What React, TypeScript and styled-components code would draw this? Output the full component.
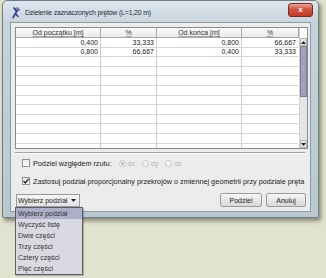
import styled, { createGlobalStyle } from 'styled-components';

const GlobalStyle = createGlobalStyle`
  html, body {
    margin: 0;
    padding: 0;
  }
  body {
    background: #e2e3cf;
    font-family: "Liberation Sans", Arial, sans-serif;
  }
`;

const Desktop = styled.div`
  position: relative;
  width: 326px;
  height: 278px;
  overflow: hidden;
  box-sizing: border-box;
  padding-left: 2px;
  background: #e2e3cf;
`;

const Window = styled.div`
  width: 317px;
  height: 218px;
  box-sizing: border-box;
  display: flex;
  flex-direction: column;
  padding: 0 7px 5px 7px;
  border: 1px solid #6f7f86;
  border-radius: 5px 5px 2px 2px;
  background: linear-gradient(#dde6ee, #c6d3dd 22px, #b9c7cf);
  box-shadow: 2px 3px 4px rgba(70, 72, 50, 0.6);
`;

const TitleBar = styled.div`
  height: 21px;
  display: flex;
  align-items: center;
  gap: 4px;
  padding-left: 1px;
`;

const TitleText = styled.span`
  flex: 1;
  padding-top: 2px;
  font-size: 6.9px;
  letter-spacing: -0.15px;
  color: #1e2a36;
`;

const CloseButton = styled.div`
  align-self: flex-start;
  width: 23px;
  height: 12px;
  margin: 2px -2px 0 0;
  border: 1px solid #7a2a22;
  border-radius: 3px;
  background: linear-gradient(#e9a595, #d1533f 45%, #c23a26);
  display: flex;
  align-items: center;
  justify-content: center;
  color: #fff;
  font-size: 8px;
  font-weight: bold;
  line-height: 1;
`;

const Client = styled.div`
  flex: 1;
  box-sizing: border-box;
  display: flex;
  flex-direction: column;
  padding: 4px 2px 4px 4px;
  border: 1px solid #8d9ba3;
  background: #ececec;
  font-size: 7px;
  color: #222;
`;

const Table = styled.div`
  height: 122px;
  box-sizing: border-box;
  display: flex;
  border: 1px solid #8a8a8a;
  background: #fff;
  overflow: hidden;
`;

const Grid = styled.div`
  flex: 1;
  display: grid;
  grid-template-columns: 85px 56px 85px 57px;
  grid-auto-rows: 9.6px;
  grid-template-rows: 10px;
  align-content: start;
`;

const HeadCell = styled.div`
  box-sizing: border-box;
  display: flex;
  align-items: center;
  justify-content: center;
  border-right: 1px solid #a8a8a8;
  border-bottom: 1px solid #a8a8a8;
  background: linear-gradient(#fbfbfb, #e9e9e9);
  color: #333;
  text-decoration: underline;
  text-decoration-color: #aaa;
`;

const Cell = styled.div<{ $last?: boolean }>`
  box-sizing: border-box;
  display: flex;
  align-items: center;
  justify-content: flex-end;
  padding-right: 2px;
  border-right: 1px solid ${(p) => (p.$last ? 'transparent' : '#cfcfcf')};
  border-bottom: 1px solid #d8d8d8;
  color: #222;
`;

const ScrollBar = styled.div`
  width: 9px;
  display: flex;
  flex-direction: column;
  background: #e6e6ea;
  border-left: 1px solid #d0d0d0;
`;

const ScrollCorner = styled.div`
  height: 10px;
  background: #fff;
`;

const ScrollArrow = styled.div`
  height: 8px;
  display: flex;
  align-items: center;
  justify-content: center;
  background: linear-gradient(90deg, #f4f4f4, #dcdcdc);
  border: 1px solid #b4b4b4;
  box-sizing: border-box;
`;

const ScrollThumb = styled.div`
  height: 51px;
  box-sizing: border-box;
  border: 1px solid #7d7d98;
  background: repeating-linear-gradient(45deg, #9c9db8 0 1px, #a6a7c0 1px 2px);
`;

const ScrollTrack = styled.div`
  flex: 1;
  background: #e4e4e8;
`;

const Separator = styled.div`
  height: 0;
  margin: 3px 3px 0 0;
  border-top: 1px solid #a0a0a0;
  border-bottom: 1px solid #fff;
`;

const OptionRow = styled.div`
  display: flex;
  align-items: center;
  gap: 2px;
  height: 18px;
  padding-left: 7px;
  font-size: 7.25px;
`;

const CheckBox = styled.div`
  width: 8px;
  height: 8px;
  box-sizing: border-box;
  border: 1px solid #8f8f8f;
  background: linear-gradient(#eaeaea, #fdfdfd);
  display: flex;
  align-items: center;
  justify-content: center;
  margin-right: 1px;
`;

const Label = styled.span<{ $disabled?: boolean }>`
  color: ${(p) => (p.$disabled ? '#b4b4b4' : '#222')};
  white-space: nowrap;
`;

const RadioGroup = styled.div`
  display: flex;
  gap: 7px;
  margin-left: 5px;
  font-size: 7px;
`;

const RadioItem = styled.div`
  display: flex;
  align-items: center;
  gap: 2px;
`;

const Radio = styled.div<{ $on?: boolean }>`
  width: 7px;
  height: 7px;
  box-sizing: border-box;
  border-radius: 50%;
  border: 1px solid #c4c4c4;
  background: #f4f4f4;
  display: flex;
  align-items: center;
  justify-content: center;
  &::after {
    content: '';
    width: 3px;
    height: 3px;
    border-radius: 50%;
    background: ${(p) => (p.$on ? '#b8b8b8' : 'transparent')};
  }
`;

const BottomRow = styled.div`
  margin-top: auto;
  display: flex;
  align-items: center;
  gap: 4px;
  padding-right: 2px;
`;

const Combo = styled.div`
  position: relative;
  display: flex;
  align-items: center;
  gap: 4px;
  height: 11px;
  margin-left: 1px;
  padding: 0 3px 0 1px;
  border: 1px solid #9a9a9a;
  background: linear-gradient(#f6f6f6, #e2e2e2);
  margin-right: auto;
`;

const DropList = styled.div`
  position: absolute;
  top: 12px;
  left: -2px;
  width: 68px;
  box-sizing: border-box;
  border: 1px solid #5c5c64;
  background: #d9d9e1;
  box-shadow: 1px 1px 1px rgba(0, 0, 0, 0.2);
  z-index: 2;
`;

const DropItem = styled.div<{ $active?: boolean }>`
  height: 11px;
  display: flex;
  align-items: center;
  padding-left: 2px;
  background: ${(p) => (p.$active ? '#aeaecb' : 'transparent')};
  color: #333;
  white-space: nowrap;
`;

const Button = styled.div<{ $w: number }>`
  width: ${(p) => p.$w}px;
  height: 14px;
  box-sizing: border-box;
  display: flex;
  align-items: center;
  justify-content: center;
  border: 1px solid #9c9c9c;
  border-radius: 2px;
  background: linear-gradient(#f7f7f7, #e6e6e6 50%, #d8d8d8);
  color: #222;
`;

const rows = [
  ['0,400', '33,333', '0,800', '66,667'],
  ['0,800', '66,667', '0,400', '33,333'],
  ...Array.from({ length: 10 }, () => ['', '', '', '']),
];

const options = ['Wybierz podział', 'Wyczyść listę', 'Dwie części', 'Trzy części', 'Cztery części', 'Pięć części'];

function Arrow({ up }: { up?: boolean }) {
  return (
    <svg width="5" height="3" viewBox="0 0 5 3">
      <path d={up ? 'M0 3 L2.5 0 L5 3 Z' : 'M0 0 L2.5 3 L5 0 Z'} fill="#222" />
    </svg>
  );
}

function AppIcon() {
  return (
    <svg width="10" height="12" viewBox="0 0 10 12" style={{ marginTop: 2 }}>
      <path d="M2 1 L4.5 4.5 L3 7 L1 11 L2.5 11.5 L4.5 8 L7 10.5 L8 9.5 L5.5 6.5 L7 4 L9 3 L8.5 2 L6 3 L3.5 0 Z" fill="#34458f" />
      <circle cx="6.5" cy="1.6" r="1.3" fill="#5a6bb8" />
    </svg>
  );
}

export default function App() {
  return (
    <Desktop>
      <GlobalStyle />
      <Window>
        <TitleBar>
          <AppIcon />
          <TitleText>Dzielenie zaznaczonych prętów (L=1,20 m)</TitleText>
          <CloseButton>x</CloseButton>
        </TitleBar>
        <Client>
          <Table>
            <Grid>
              <HeadCell>Od początku [m]</HeadCell>
              <HeadCell>%</HeadCell>
              <HeadCell>Od końca [m]</HeadCell>
              <HeadCell>%</HeadCell>
              {rows.map((r, i) =>
                r.map((v, j) => (
                  <Cell key={`${i}-${j}`} $last={j === 3}>
                    {v}
                  </Cell>
                ))
              )}
            </Grid>
            <ScrollBar>
              <ScrollCorner />
              <ScrollArrow>
                <Arrow up />
              </ScrollArrow>
              <ScrollThumb />
              <ScrollTrack />
              <ScrollArrow>
                <Arrow />
              </ScrollArrow>
            </ScrollBar>
          </Table>
          <Separator />
          <OptionRow>
            <CheckBox />
            <Label>Podziel względem rzutu:</Label>
            <RadioGroup>
              <RadioItem>
                <Radio $on />
                <Label $disabled>dx</Label>
              </RadioItem>
              <RadioItem>
                <Radio />
                <Label $disabled>dy</Label>
              </RadioItem>
              <RadioItem>
                <Radio />
                <Label $disabled>dz</Label>
              </RadioItem>
            </RadioGroup>
          </OptionRow>
          <OptionRow>
            <CheckBox>
              <svg width="6" height="6" viewBox="0 0 6 6">
                <path d="M0.5 3 L2.3 5 L5.5 0.8" stroke="#222" strokeWidth="1.3" fill="none" />
              </svg>
            </CheckBox>
            <Label>Zastosuj podział proporcjonalny przekrojów o zmiennej geometrii przy podziale pręta</Label>
          </OptionRow>
          <BottomRow>
            <Combo>
              Wybierz podział
              <Arrow />
              <DropList>
                {options.map((o, i) => (
                  <DropItem key={o} $active={i === 0}>
                    {o}
                  </DropItem>
                ))}
              </DropList>
            </Combo>
            <Button $w={42}>Podziel</Button>
            <Button $w={40}>Anuluj</Button>
          </BottomRow>
        </Client>
      </Window>
    </Desktop>
  );
}
